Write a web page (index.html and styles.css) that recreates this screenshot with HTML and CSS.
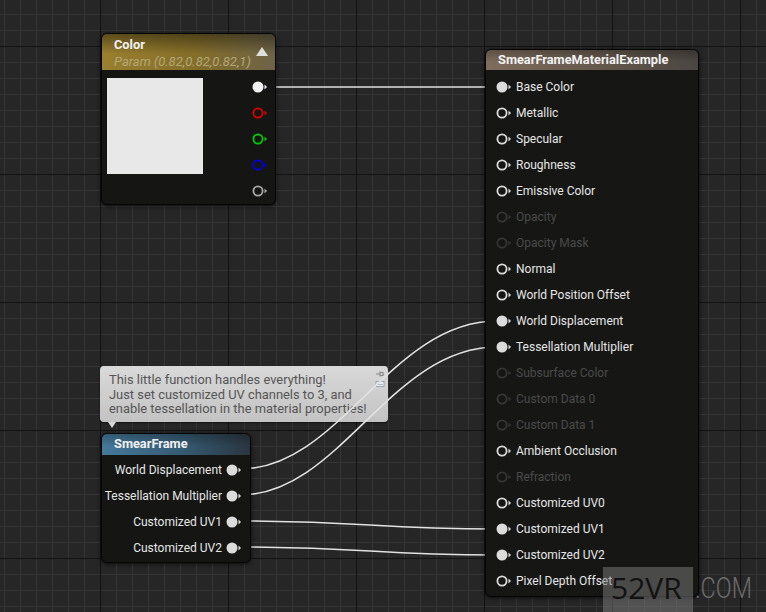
FILE: index.html
```html
<!DOCTYPE html>
<html lang="en">
<head>
    <meta charset="UTF-8">
    <title>SmearFrame Material Graph</title>
    <link rel="stylesheet" href="styles.css">
</head>
<body>
<div class="graph">

    <!-- comment bubble above the SmearFrame function -->
    <div class="comment">
        <p>This little function handles everything!<br>Just set customized UV channels to 3, and<br>enable tessellation in the material properties!</p>
        <svg class="comment-icons" viewBox="0 0 10 20" width="10" height="20">
            <path d="M1 5h4M5 2.5v5M5 3.5h3v3h-3z" stroke="#8a8a8a" stroke-width="1.2" fill="none"/>
            <rect x="1" y="12.5" width="8" height="5" fill="#e8eef4" stroke="#8a9aa8" stroke-width="0.8"/>
            <path d="M2.5 15.5h1M4.5 15.5h1M6.5 15.5h1" stroke="#5a6a7a" stroke-width="0.8"/>
        </svg>
    </div>

    <!-- wires -->
    <svg class="wires" width="766" height="612" viewBox="0 0 766 612">
        <path d="M266 87 L497 87"/>
        <path d="M240 469 C 340 469, 390 321, 497 321"/>
        <path d="M240 495 C 340 495, 390 347, 497 347"/>
        <path d="M240 521 C 370 521, 370 529, 497 529"/>
        <path d="M240 547 C 370 547, 370 555, 497 555"/>
    </svg>

    <!-- Color parameter node -->
    <div class="node node-color">
        <div class="node-head head-param">
            <div class="node-title">Color</div>
            <div class="node-sub">Param (0.82,0.82,0.82,1)</div>
            <span class="collapse"></span>
        </div>
        <div class="color-body">
            <div class="swatch"></div>
            <div class="pin-col">
                <div class="pin-row"><svg class="pin on white" viewBox="0 0 16 12"><circle cx="6" cy="6" r="4.6"/><path d="M12.5 3.5 15 6 12.5 8.5z"/></svg></div>
                <div class="pin-row"><svg class="pin red" viewBox="0 0 16 12"><circle cx="6" cy="6" r="4.6"/><path d="M12.5 3.5 15 6 12.5 8.5z"/></svg></div>
                <div class="pin-row"><svg class="pin green" viewBox="0 0 16 12"><circle cx="6" cy="6" r="4.6"/><path d="M12.5 3.5 15 6 12.5 8.5z"/></svg></div>
                <div class="pin-row"><svg class="pin blue" viewBox="0 0 16 12"><circle cx="6" cy="6" r="4.6"/><path d="M12.5 3.5 15 6 12.5 8.5z"/></svg></div>
                <div class="pin-row"><svg class="pin grey" viewBox="0 0 16 12"><circle cx="6" cy="6" r="4.6"/><path d="M12.5 3.5 15 6 12.5 8.5z"/></svg></div>
            </div>
        </div>
    </div>

    <!-- SmearFrame function node -->
    <div class="node node-func">
        <div class="node-head head-func">
            <div class="node-title">SmearFrame</div>
        </div>
        <div class="func-body">
            <div class="out-row"><span>World Displacement</span><svg class="pin on" viewBox="0 0 16 12"><circle cx="6" cy="6" r="4.6"/><path d="M12.5 3.5 15 6 12.5 8.5z"/></svg></div>
            <div class="out-row"><span>Tessellation Multiplier</span><svg class="pin on" viewBox="0 0 16 12"><circle cx="6" cy="6" r="4.6"/><path d="M12.5 3.5 15 6 12.5 8.5z"/></svg></div>
            <div class="out-row"><span>Customized UV1</span><svg class="pin on" viewBox="0 0 16 12"><circle cx="6" cy="6" r="4.6"/><path d="M12.5 3.5 15 6 12.5 8.5z"/></svg></div>
            <div class="out-row"><span>Customized UV2</span><svg class="pin on" viewBox="0 0 16 12"><circle cx="6" cy="6" r="4.6"/><path d="M12.5 3.5 15 6 12.5 8.5z"/></svg></div>
        </div>
    </div>

    <!-- material result node -->
    <div class="node node-material">
        <div class="node-head head-material">
            <div class="node-title">SmearFrameMaterialExample</div>
        </div>
        <div class="material-body">
            <div class="in-row"><svg class="pin on" viewBox="0 0 16 12"><circle cx="6" cy="6" r="4.6"/><path d="M12.5 3.5 15 6 12.5 8.5z"/></svg><span>Base Color</span></div>
            <div class="in-row"><svg class="pin" viewBox="0 0 16 12"><circle cx="6" cy="6" r="4.6"/><path d="M12.5 3.5 15 6 12.5 8.5z"/></svg><span>Metallic</span></div>
            <div class="in-row"><svg class="pin" viewBox="0 0 16 12"><circle cx="6" cy="6" r="4.6"/><path d="M12.5 3.5 15 6 12.5 8.5z"/></svg><span>Specular</span></div>
            <div class="in-row"><svg class="pin" viewBox="0 0 16 12"><circle cx="6" cy="6" r="4.6"/><path d="M12.5 3.5 15 6 12.5 8.5z"/></svg><span>Roughness</span></div>
            <div class="in-row"><svg class="pin" viewBox="0 0 16 12"><circle cx="6" cy="6" r="4.6"/><path d="M12.5 3.5 15 6 12.5 8.5z"/></svg><span>Emissive Color</span></div>
            <div class="in-row off"><svg class="pin" viewBox="0 0 16 12"><circle cx="6" cy="6" r="4.6"/><path d="M12.5 3.5 15 6 12.5 8.5z"/></svg><span>Opacity</span></div>
            <div class="in-row off"><svg class="pin" viewBox="0 0 16 12"><circle cx="6" cy="6" r="4.6"/><path d="M12.5 3.5 15 6 12.5 8.5z"/></svg><span>Opacity Mask</span></div>
            <div class="in-row"><svg class="pin" viewBox="0 0 16 12"><circle cx="6" cy="6" r="4.6"/><path d="M12.5 3.5 15 6 12.5 8.5z"/></svg><span>Normal</span></div>
            <div class="in-row"><svg class="pin" viewBox="0 0 16 12"><circle cx="6" cy="6" r="4.6"/><path d="M12.5 3.5 15 6 12.5 8.5z"/></svg><span>World Position Offset</span></div>
            <div class="in-row"><svg class="pin on" viewBox="0 0 16 12"><circle cx="6" cy="6" r="4.6"/><path d="M12.5 3.5 15 6 12.5 8.5z"/></svg><span>World Displacement</span></div>
            <div class="in-row"><svg class="pin on" viewBox="0 0 16 12"><circle cx="6" cy="6" r="4.6"/><path d="M12.5 3.5 15 6 12.5 8.5z"/></svg><span>Tessellation Multiplier</span></div>
            <div class="in-row off"><svg class="pin" viewBox="0 0 16 12"><circle cx="6" cy="6" r="4.6"/><path d="M12.5 3.5 15 6 12.5 8.5z"/></svg><span>Subsurface Color</span></div>
            <div class="in-row off"><svg class="pin" viewBox="0 0 16 12"><circle cx="6" cy="6" r="4.6"/><path d="M12.5 3.5 15 6 12.5 8.5z"/></svg><span>Custom Data 0</span></div>
            <div class="in-row off"><svg class="pin" viewBox="0 0 16 12"><circle cx="6" cy="6" r="4.6"/><path d="M12.5 3.5 15 6 12.5 8.5z"/></svg><span>Custom Data 1</span></div>
            <div class="in-row"><svg class="pin" viewBox="0 0 16 12"><circle cx="6" cy="6" r="4.6"/><path d="M12.5 3.5 15 6 12.5 8.5z"/></svg><span>Ambient Occlusion</span></div>
            <div class="in-row off"><svg class="pin" viewBox="0 0 16 12"><circle cx="6" cy="6" r="4.6"/><path d="M12.5 3.5 15 6 12.5 8.5z"/></svg><span>Refraction</span></div>
            <div class="in-row"><svg class="pin" viewBox="0 0 16 12"><circle cx="6" cy="6" r="4.6"/><path d="M12.5 3.5 15 6 12.5 8.5z"/></svg><span>Customized UV0</span></div>
            <div class="in-row"><svg class="pin on" viewBox="0 0 16 12"><circle cx="6" cy="6" r="4.6"/><path d="M12.5 3.5 15 6 12.5 8.5z"/></svg><span>Customized UV1</span></div>
            <div class="in-row"><svg class="pin on" viewBox="0 0 16 12"><circle cx="6" cy="6" r="4.6"/><path d="M12.5 3.5 15 6 12.5 8.5z"/></svg><span>Customized UV2</span></div>
            <div class="in-row"><svg class="pin" viewBox="0 0 16 12"><circle cx="6" cy="6" r="4.6"/><path d="M12.5 3.5 15 6 12.5 8.5z"/></svg><span>Pixel Depth Offset</span></div>
        </div>
    </div>

    <!-- site watermark -->
    <div class="watermark"><span class="wm-box">52VR</span><span class="wm-com">.COM</span></div>
</div>
</body>
</html>
```

FILE: styles.css
```css
body {
    margin: 0;
    padding: 0;
    background-color: #262626;
    font-family: Roboto, "Liberation Sans", sans-serif;
    font-size: 12px;
    color: #e6e6e6;
}
.graph {
    position: relative;
    width: 766px;
    height: 612px;
    overflow: hidden;
    background-color: #262626;
    background-image:
        linear-gradient(#131313 1px, transparent 1px),
        linear-gradient(90deg, #131313 1px, transparent 1px),
        linear-gradient(#353535 1px, transparent 1px),
        linear-gradient(90deg, #353535 1px, transparent 1px);
    background-size: 128px 128px, 128px 128px, 16px 16px, 16px 16px;
    background-position: 0 46px, 100px 0, 0 14px, 4px 0;
}

/* wires */
.wires {
    position: absolute;
    top: 0;
    left: 0;
}
.wires path {
    fill: none;
    stroke: #e2e2e2;
    stroke-width: 1.6;
}

/* nodes */
.node {
    position: absolute;
    box-sizing: border-box;
    border: 1px solid #050505;
    border-radius: 6px;
    background-color: #151614;
    box-shadow: 0 1px 4px rgba(0, 0, 0, 0.7);
    overflow: hidden;
}
.node-head {
    position: relative;
    padding: 0 12px;
    box-sizing: border-box;
}
.node-title {
    font-weight: bold;
    font-size: 12.8px;
    color: #f2f2f2;
    line-height: 20px;
}
.node-sub {
    font-style: italic;
    font-size: 13px;
    color: #b3a779;
    line-height: 14px;
}
.head-param {
    height: 36px;
    padding-top: 1px;
    background:
        linear-gradient(rgba(0, 0, 0, 0.4), rgba(0, 0, 0, 0) 55%),
        linear-gradient(90deg, #9a7f2e, #836d29 55%, #6d6347);
}
.head-material {
    height: 20px;
    background:
        linear-gradient(rgba(0, 0, 0, 0.25), rgba(255, 255, 255, 0) 60%),
        linear-gradient(90deg, #7e6c5c, #5f5449 65%, #4a4642);
}
.head-func {
    height: 21px;
    background:
        linear-gradient(rgba(0, 0, 0, 0.25), rgba(255, 255, 255, 0) 60%),
        linear-gradient(90deg, #45799a, #355a72 55%, #2a3640);
}
.collapse {
    position: absolute;
    right: 7px;
    top: 13px;
    width: 0;
    height: 0;
    border-left: 6px solid transparent;
    border-right: 6px solid transparent;
    border-bottom: 9px solid #dedede;
}

/* pins */
.pin {
    width: 16px;
    height: 12px;
    flex: none;
    color: #dcdcdc;
}
.pin circle {
    fill: none;
    stroke: currentColor;
    stroke-width: 1.8;
}
.pin path {
    fill: currentColor;
}
.pin.on circle {
    fill: currentColor;
}
.pin.white { color: #f2f2f2; }
.pin.red { color: #e00000; }
.pin.green { color: #00cc00; }
.pin.blue { color: #0000e0; }
.pin.grey { color: #a8a8a8; }

/* Color node */
.node-color {
    left: 101px;
    top: 33px;
    width: 175px;
    height: 172px;
}
.color-body {
    display: flex;
    padding: 4px 7px 0 5px;
}
.swatch {
    width: 96px;
    height: 96px;
    margin-top: 4px;
    background-color: #e8e8e8;
}
.pin-col {
    margin-left: auto;
    display: flex;
    flex-direction: column;
}
.pin-row {
    height: 26px;
    display: flex;
    align-items: center;
}

/* SmearFrame node */
.node-func {
    left: 101px;
    top: 433px;
    width: 150px;
    height: 130px;
}
.func-body {
    padding: 2px 8px 0 0;
}
.out-row {
    height: 26px;
    display: flex;
    align-items: center;
    justify-content: flex-end;
    gap: 4px;
    white-space: nowrap;
}

/* material result node */
.node-material {
    left: 485px;
    top: 49px;
    width: 214px;
    height: 548px;
    background-color: #161715;
}
.material-body {
    padding: 4px 0 0 10px;
}
.in-row {
    height: 26px;
    display: flex;
    align-items: center;
    gap: 4px;
}
.in-row.off {
    color: #4a4a4a;
}
.in-row.off .pin {
    color: #363636;
}

/* comment */
.comment {
    position: absolute;
    left: 100px;
    top: 366px;
    width: 288px;
    height: 56px;
    box-sizing: border-box;
    padding: 7px 9px 0;
    border-radius: 4px;
    background: linear-gradient(#d9d9d9, #c3c3c3);
    box-shadow: 0 1px 2px rgba(0, 0, 0, 0.5);
}
.comment::after {
    content: "";
    position: absolute;
    left: 8px;
    bottom: -6px;
    border-left: 4px solid transparent;
    border-right: 4px solid transparent;
    border-top: 6px solid #d8d8d8;
}
.comment p {
    margin: 0;
    color: #555555;
    font-size: 12.9px;
    line-height: 14.5px;
}
.comment-icons {
    position: absolute;
    right: 3px;
    top: 3px;
}

/* watermark */
.watermark {
    position: absolute;
    left: 603px;
    top: 567px;
    display: flex;
    align-items: flex-start;
    font-family: "Open Sans", "Liberation Sans", sans-serif;
    font-size: 30px;
    line-height: 42px;
}
.wm-box {
    width: 90px;
    height: 45px;
    padding-left: 8px;
    box-sizing: border-box;
    background-color: rgba(125, 125, 125, 0.5);
    color: #121212;
}
.wm-com {
    display: inline-block;
    margin-left: 2px;
    color: #6c6c6c;
    font-family: Roboto, "Liberation Sans", sans-serif;
    font-weight: 300;
    transform: scaleX(0.78);
    transform-origin: left center;
}
```
